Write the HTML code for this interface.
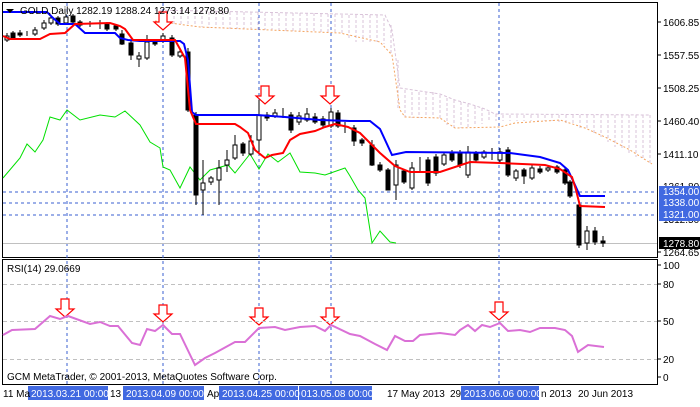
<!DOCTYPE html><html><head><style>body{margin:0;background:#fff;width:700px;height:402px;overflow:hidden;font-family:"Liberation Sans",sans-serif}</style></head><body>
<svg width="700" height="402" viewBox="0 0 700 402" xmlns="http://www.w3.org/2000/svg" font-family="Liberation Sans, sans-serif" font-size="10">
<rect width="700" height="402" fill="#fff"/>
<!-- frames -->
<rect x="2.5" y="2.5" width="655" height="255" fill="none" stroke="#000"/>
<rect x="2.5" y="259.5" width="655" height="125" fill="none" stroke="#000"/>
<!-- cloud hatches -->
<g stroke="#d9c3d9" stroke-dasharray="3,2">
<path d="M160 10V22M167 10V23M174 11V24M181 11V25M188 11V26M195 11V27M202 11V27M209 12V28M216 12V28M223 12V28M230 12V29M237 12V29M244 12V29M251 12V30M258 12V30M265 13V30M272 13V30M279 13V31M286 13V31M293 13V31M300 13V31M307 13V32M314 13V32M321 14V32M328 14V33M335 14V33M342 15V34M349 15V40M356 15V42M363 15V42M370 15V42M377 15V42M384 18V44M391 25V55M398 60V110M405 90V117M412 92V118M419 92V118M426 92V118M433 92V118M440 95V118M447 98V125M454 100V128M461 102V128M468 104V128M475 106V126M482 108V124M489 112V122M496 114V121M503 115V121M510 115V121M517 115V121M524 115V121M531 115V121M538 115V121M545 115V121M552 115V121M559 115V122M566 115V123M573 115V125M580 115V128M587 115V130M594 115V133M601 115V137M608 115V142M615 115V147M622 115V150M629 115V153M636 115V157M643 115V160M650 115V163"/>
<polyline fill="none" points="155,10 250,12 340,14 385,15 392,30 400,88 440,94 455,100 470,104 485,109 495,114 650,115"/>
</g>
<polyline fill="none" stroke="#f4a460" stroke-dasharray="2,2" points="155,21 200,27 270,30 340,33 380,42 392,55 400,110 405,117 440,118 455,128 500,127 515,123 560,120 585,128 605,137 630,150 652,164"/>
<!-- grid -->
<g stroke="#3a5fd0" stroke-dasharray="3,3" fill="none">
<path d="M67 3V384M163 3V384M259 3V384M331 3V384M499 3V384"/>
<path d="M3 192H657M3 203H657M3 215H657"/>
</g>
<path d="M3 243.5H657" stroke="#c0c0c0"/>
<!-- green chikou -->
<polyline fill="none" stroke="#00e000" points="3,178 20,158 27,144 35,152 43,140 50,117 60,120 67,110 80,120 100,115 115,117 125,111 140,125 150,142 160,148 163,167 170,170 180,188 190,167 200,180 210,170 228,165 235,173 250,154 259,169 268,154 278,162 290,153 300,172 315,173 325,175 345,168 350,176 358,190 365,198 372,243 380,231 390,242 396,243"/>
<!-- candles -->
<g stroke="#000" id="c"></g>
<g stroke="#000" stroke-width="1">
<path d="M7 33V42M13 31V40M20 30V37M27 31V36M35 27V36M44 20V30M51 15V25M58 16V26M66 14V25M73 14V24M80 20V27M90 21V27M100 20V29M107 22V31M116 24V31M122 30V45M131 40V60M139 52V67M147 35V60M155 39V46M163 33V43M172 35V57M180 49V58M188 48V112M196 112V205M203 160V215M211 176V185M219 160V205M227 150V172M235 135V160M243 142V156M251 135V156M259 100V152M267 112V121M275 109V118M283 108V118M291 112V133M299 112V125M307 108V122M315 113V124M323 116V128M331 108V128M338 110V128M345 122V133M354 125V146M362 138V146M372 140V166M380 162V172M388 168V190M396 160V200M404 169V184M412 162V190M420 157V172M428 157V186M436 154V176M444 152V166M452 150V162M460 150V168M468 146V178M476 151V162M484 150V159M492 148V160M500 148V164M508 147V177M516 169V181M524 168V184M532 165V180M540 166V174M548 165V172M557 165V174M565 168V185M570 180V198M579 200V248M587 226V250M595 227V245M603 236V247"/>
</g>
<g stroke="#000" fill="#000">
<rect x="11" y="33" width="4" height="5"/><rect x="18" y="33" width="4" height="2"/><rect x="56" y="18" width="4" height="6"/><rect x="71" y="16" width="4" height="6"/><rect x="78" y="22" width="4" height="3"/><rect x="105" y="24" width="4" height="5"/><rect x="114" y="26" width="4" height="3"/><rect x="120" y="34" width="4" height="10"/><rect x="129" y="43" width="4" height="12"/><rect x="153" y="41" width="4" height="3"/><rect x="170" y="38" width="4" height="17"/><rect x="186" y="52" width="4" height="58"/><rect x="194" y="115" width="4" height="80"/><rect x="241" y="144" width="4" height="9"/><rect x="265" y="115" width="4" height="3"/><rect x="289" y="115" width="4" height="15"/><rect x="313" y="117" width="4" height="5"/><rect x="321" y="119" width="4" height="6"/><rect x="336" y="113" width="4" height="13"/><rect x="352" y="128" width="4" height="13"/><rect x="360" y="140" width="4" height="3"/><rect x="370" y="145" width="4" height="20"/><rect x="378" y="165" width="4" height="5"/><rect x="386" y="170" width="4" height="20"/><rect x="402" y="171" width="4" height="11"/><rect x="426" y="160" width="4" height="23"/><rect x="434" y="157" width="4" height="16"/><rect x="450" y="153" width="4" height="7"/><rect x="458" y="153" width="4" height="12"/><rect x="474" y="154" width="4" height="6"/><rect x="506" y="150" width="4" height="25"/><rect x="522" y="170" width="4" height="6"/><rect x="538" y="169" width="4" height="3"/><rect x="555" y="167" width="4" height="5"/><rect x="563" y="170" width="4" height="13"/><rect x="568" y="182" width="4" height="14"/><rect x="577" y="205" width="4" height="40"/><rect x="593" y="231" width="4" height="11"/><rect x="601" y="241" width="4" height="2"/>
</g>
<g stroke="#000" fill="#fff">
<rect x="5" y="36" width="4" height="4"/><rect x="33" y="30" width="4" height="4"/><rect x="42" y="23" width="4" height="5"/><rect x="49" y="18" width="4" height="5"/><rect x="64" y="17" width="4" height="6"/><rect x="137" y="56" width="4" height="3"/><rect x="145" y="42" width="4" height="16"/><rect x="161" y="36" width="4" height="5"/><rect x="178" y="52" width="4" height="4"/><rect x="201" y="183" width="4" height="7"/><rect x="209" y="178" width="4" height="4"/><rect x="217" y="168" width="4" height="12"/><rect x="225" y="160" width="4" height="5"/><rect x="233" y="145" width="4" height="13"/><rect x="249" y="141" width="4" height="13"/><rect x="257" y="115" width="4" height="25"/><rect x="273" y="113" width="4" height="3"/><rect x="297" y="116" width="4" height="6"/><rect x="305" y="114" width="4" height="6"/><rect x="329" y="112" width="4" height="14"/><rect x="394" y="165" width="4" height="20"/><rect x="410" y="168" width="4" height="20"/><rect x="442" y="155" width="4" height="9"/><rect x="466" y="152" width="4" height="23"/><rect x="482" y="152" width="4" height="5"/><rect x="498" y="152" width="4" height="8"/><rect x="514" y="171" width="4" height="7"/><rect x="530" y="168" width="4" height="10"/><rect x="546" y="168" width="4" height="2"/><rect x="585" y="231" width="4" height="12"/>
</g>
<!-- tenkan/kijun -->
<polyline fill="none" stroke="#0000ff" stroke-width="2" points="3,12 47,12 52,17 60,24 75,24 85,33 115,33 120,38 128,40 140,41 180,41 184,44 188,60 192,112 196,115 257,115 285,117 320,120 350,121 370,121 380,129 392,155 406,152 510,153 540,157 560,163 568,170 575,185 580,196 605,196"/>
<polyline fill="none" stroke="#ff0000" stroke-width="2" points="3,36 10,39 40,39 50,34 65,33 75,24 110,23 120,26 125,29 133,40 175,40 185,58 190,110 196,124 235,124 240,127 248,133 255,150 265,158 272,155 283,153 290,140 300,134 315,131 325,127 335,124 348,127 360,133 380,153 395,166 410,172 440,172 470,162 500,163 545,165 560,169 572,177 576,190 580,206 605,207"/>
<!-- arrows main -->
<g fill="#fff" stroke="#ff0000" stroke-width="1.2">
<path d="M159 12H167V22H172L163 30L154 22H159Z"/>
<path d="M261 86H269V96H274L265 104L256 96H261Z"/>
<path d="M326 86H334V96H339L330 104L321 96H326Z"/>
<path d="M61 299H69V309H74L65 317L56 309H61Z"/>
<path d="M159 305H167V314H172L163 322L154 314H159Z"/>
<path d="M255 308H263V317H268L259 325L250 317H255Z"/>
<path d="M326 308H334V317H339L330 325L321 317H326Z"/>
<path d="M495 302H503V312H508L499 320L490 312H495Z"/>
</g>
<!-- RSI -->
<g stroke="#c0c0c0" stroke-dasharray="4,3"><path d="M3 284.5H657M3 321.5H657M3 359.5H657"/></g>
<polyline fill="none" stroke="#da70d6" stroke-width="2" points="3,335 12,330 35,329 50,316 60,319 68,316 90,324 100,322 110,326 118,326 132,343 140,345 147,329 155,331 163,325 172,334 180,334 195,365 205,358 215,353 235,342 245,342 259,328 275,327 285,330 300,327 315,326 325,331 331,325 350,334 360,336 375,344 387,350 395,336 405,341 413,341 420,335 440,333 455,335 460,330 468,325 475,331 482,325 490,327 500,323 508,331 520,330 530,332 540,328 555,328 565,330 572,336 578,352 588,345 604,347"/>
<text x="7" y="272" font-size="10">RSI(14) 29.0669</text>
<text x="7" y="380" font-size="10">GCM MetaTrader, © 2001-2013, MetaQuotes Software Corp.</text>
<text x="20" y="14" font-size="10">GOLD,Daily  1282.19 1288.24 1273.14 1278.80</text>
<path d="M6 9H14L10 13Z" fill="#000"/>
<!-- price scale -->
<g stroke="#000"><path d="M657 22H661M657 55H661M657 88H661M657 121H661M657 154H661M657 252H661M657 265H661M657 284H661M657 321H661M657 359H661M657 377H661"/></g>
<g font-size="10" fill="#000">
<text x="663" y="26">1606.85</text><text x="663" y="59">1557.55</text><text x="663" y="92">1508.25</text><text x="663" y="125">1460.40</text><text x="663" y="158">1411.10</text><text x="663" y="190">1361.80</text><text x="663" y="223">1312.50</text><text x="663" y="256">1264.65</text>
<text x="663" y="269">100</text><text x="663" y="288">80</text><text x="663" y="325">50</text><text x="663" y="363">20</text><text x="663" y="381">0</text>
</g>
<g fill="#4169e1"><rect x="659" y="186" width="41" height="12"/><rect x="659" y="198" width="41" height="11"/><rect x="659" y="209" width="41" height="12"/></g>
<rect x="659" y="237" width="41" height="12" fill="#000"/>
<g font-size="10" fill="#fff"><text x="663" y="195">1354.00</text><text x="663" y="206">1338.00</text><text x="663" y="218">1321.00</text><text x="663" y="247">1278.80</text></g>
<!-- time axis -->
<g fill="#4169e1"><rect x="28" y="386" width="80" height="14"/><rect x="123" y="386" width="81" height="14"/><rect x="219" y="386" width="79" height="14"/><rect x="299" y="386" width="73" height="14"/><rect x="461" y="386" width="78" height="14"/></g>
<g font-size="10" fill="#000"><text x="3" y="397">11 Ma</text><text x="110" y="397">13</text><text x="207" y="397">Ap</text><text x="387" y="397">17 May 2013</text><text x="450" y="397">29</text><text x="541" y="397">n 2013</text><text x="578" y="397">20 Jun 2013</text></g>
<g font-size="10" fill="#fff"><text x="31" y="397">2013.03.21 00:00</text><text x="126" y="397">2013.04.09 00:00</text><text x="222" y="397">2013.04.25 00:00</text><text x="301" y="397">013.05.08 00:00</text><text x="464" y="397">2013.06.06 00:00</text></g>
</svg>
</body></html>
